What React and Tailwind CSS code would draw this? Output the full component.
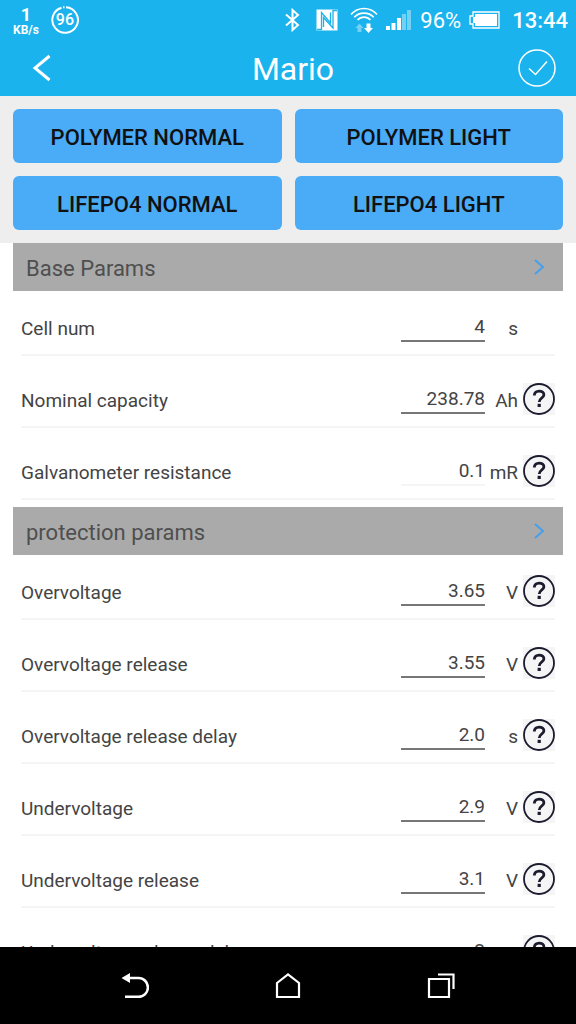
import { useState } from 'react'

const PRESETS = ['POLYMER NORMAL', 'POLYMER LIGHT', 'LIFEPO4 NORMAL', 'LIFEPO4 LIGHT']

const SECTIONS = [
  {
    title: 'Base Params',
    rows: [
      { id: 'cells', label: 'Cell num', value: '4', unit: 's', noHelp: true },
      { id: 'capacity', label: 'Nominal capacity', value: '238.78', unit: 'Ah' },
      { id: 'galvano', label: 'Galvanometer resistance', value: '0.1', unit: 'mR', readOnly: true },
    ],
  },
  {
    title: 'protection params',
    rows: [
      { id: 'ov', label: 'Overvoltage', value: '3.65', unit: 'V' },
      { id: 'ovr', label: 'Overvoltage release', value: '3.55', unit: 'V' },
      { id: 'ovrd', label: 'Overvoltage release delay', value: '2.0', unit: 's' },
      { id: 'uv', label: 'Undervoltage', value: '2.9', unit: 'V' },
      { id: 'uvr', label: 'Undervoltage release', value: '3.1', unit: 'V' },
      { id: 'uvrd', label: 'Undervoltage release delay', value: '2', unit: 's' },
    ],
  },
]

function StatusBar() {
  return (
    <div className="flex h-10 items-center justify-between pr-2 pl-[13px]">
      <div className="flex items-center gap-3">
        <div className="flex flex-col items-center pt-0.5 font-bold">
          <span className="text-lg leading-[18px]">1</span>
          <span className="text-xs leading-3">KB/s</span>
        </div>
        <div className="relative flex size-7 items-center justify-center">
          <svg viewBox="0 0 28 28" className="absolute inset-0" fill="none" stroke="currentColor" strokeWidth="2">
            <path d="M15 1.200A12.800 12.800 0 1 1 10.500 1.700M12 1.300l1.500-.1" />
          </svg>
          <span className="text-base leading-4 font-medium">96</span>
        </div>
      </div>

      <div className="flex items-center">
        <svg width="16" height="26" viewBox="0 0 16 26" fill="none" stroke="currentColor" strokeWidth="2">
          <path d="M2 7.500l12 10.500-5.500 5V3L14 8 2 18.500" />
        </svg>
        <svg width="22" height="22" viewBox="0 0 22 22" className="ml-4">
          <path fill="currentColor" d="M0.500 0.500h21v21H0.500z" />
          <path fill="none" stroke="#1ab3ed" strokeWidth="1.300" d="M1 20.500h4.500V3.500L14.500 14V3.500M7.500 18V8.500L17 19V1.500h4" />
        </svg>
        <svg width="28" height="26" viewBox="0 0 28 26" className="ml-3" fill="none" stroke="currentColor" strokeWidth="1.600">
          <path d="M1 7.500C8-.5 20-.5 27 7.500M4.300 10.200c5-5.500 14.400-5.500 19.400 0M7.500 13c3.500-3.800 9.500-3.800 13 0" />
          <path fill="currentColor" stroke="none" opacity=".4" d="M9.500 16.500l4 4.500H11.500V25H7.500V21H5.500z" />
          <path fill="currentColor" stroke="none" d="M16.500 16.500h4V21h2.500L18.500 26l-4.500-5h2.500z" />
        </svg>
        <svg width="26" height="20" viewBox="0 0 26 20" className="ml-2" fill="currentColor">
          <path d="M0 16h4v4H0zM5.500 13h4v7h-4zM11 8h4v12h-4z" />
          <path opacity=".4" d="M16 4h4v16h-4zM21 0h4v20h-4z" />
        </svg>
        <span className="ml-2 pt-0.5 text-[22px] leading-7">96%</span>
        <svg width="31" height="18" viewBox="0 0 31 18" className="ml-2" fill="none" stroke="currentColor" strokeWidth="1.300">
          <path d="M4 1h26v16H4v-4H1V5h3z" />
          <path fill="currentColor" stroke="none" d="M6 3h22v12H6v-3H4V6h2z" />
        </svg>
        <span className="ml-3 pt-0.5 text-[22px] leading-7 font-medium">13:44</span>
      </div>
    </div>
  )
}

function TitleBar() {
  return (
    <div className="flex h-14 items-center justify-between pr-5 pl-8">
      <button aria-label="Back" className="flex w-9 justify-start">
        <svg width="20" height="28" viewBox="0 0 20 28" fill="none" stroke="currentColor" strokeWidth="3">
          <path d="M17.500 2L3 14l14.500 12" />
        </svg>
      </button>
      <h1 className="pt-0.5 text-[32px] leading-10">Mario</h1>
      <button aria-label="Save">
        <svg width="38" height="38" viewBox="0 0 38 38" fill="none" stroke="currentColor" strokeWidth="1.500">
          <circle cx="19" cy="19" r="18" />
          <path d="M11 19.500l6.500 6L29 12.500" />
        </svg>
      </button>
    </div>
  )
}

function HelpButton({ label }) {
  return (
    <button aria-label={`Help: ${label}`} className="bg-[#f5f5f5] text-[#1c1b2e]">
      <svg width="32" height="32" viewBox="0 0 32 32" fill="none" stroke="currentColor">
        <circle cx="16" cy="16" r="15" strokeWidth="1.800" />
        <path strokeWidth="2.800" d="M11.300 12.500c0-6 9.600-5.600 9.600-.8 0 3.300-4.700 3.400-4.700 7.300" />
        <path strokeWidth="3.200" d="M16.200 20.800v3.200" />
      </svg>
    </button>
  )
}

function ParamRow({ row }) {
  const [value, setValue] = useState(row.value)

  return (
    <div className="mx-2 mb-[7px] flex h-[65px] items-center border-b-2 border-[#f5f5f5] pt-[9px] text-[19px] leading-7 text-[#444]">
      <label htmlFor={row.id} className="flex-1 pt-1">{row.label}</label>
      <input
        id={row.id}
        value={value}
        readOnly={row.readOnly}
        onChange={e => setValue(e.target.value)}
        className={`h-[30px] w-[84px] border-b-2 text-right outline-none ${
          row.readOnly ? 'border-[#f5f5f5]' : 'border-[#777]'
        }`}
      />
      <span className="w-[33px] pt-1 text-right">{row.unit}</span>
      <div className="ml-[5px] flex w-8">
        {!row.noHelp && <HelpButton label={row.label} />}
      </div>
    </div>
  )
}

function Section({ section }) {
  return (
    <section className="px-[13px]">
      <button className="flex h-12 w-full items-center justify-between bg-[#aaa] pr-4 pl-[13px] text-[#4f4f4f]">
        <h2 className="pt-1 text-[22px] leading-7">{section.title}</h2>
        <svg width="14" height="18" viewBox="0 0 14 18" fill="none" stroke="#3f9ff0" strokeWidth="1.800">
          <path d="M2 2l8 7-8 7" />
        </svg>
      </button>
      {section.rows.map(row => <ParamRow key={row.id} row={row} />)}
    </section>
  )
}

function NavBar() {
  return (
    <nav className="grid h-[77px] shrink-0 grid-cols-3 items-center bg-black px-[58px] text-white">
      <button aria-label="Back" className="justify-self-center">
        <svg width="28" height="28" viewBox="0 0 28 28" fill="none" stroke="currentColor" strokeWidth="2.500">
          <path d="M7 6h10.500a9.400 9.400 0 0 1 0 18.800H4" />
          <path fill="currentColor" stroke="none" d="M0.500 6L9 1v10z" />
        </svg>
      </button>
      <button aria-label="Home" className="justify-self-center">
        <svg width="28" height="28" viewBox="0 0 28 28" fill="none" stroke="currentColor" strokeWidth="2.200">
          <path d="M3 11L14 2.500 25 11v14H3z" />
        </svg>
      </button>
      <button aria-label="Recent apps" className="justify-self-center">
        <svg width="28" height="28" viewBox="0 0 28 28" fill="none" stroke="currentColor" strokeWidth="2.200">
          <path d="M2 7h20v18H2zM11 2.500h15.500V17" />
        </svg>
      </button>
    </nav>
  )
}

export default function App() {
  return (
    <div className="flex h-screen flex-col overflow-hidden bg-white font-['Roboto',sans-serif]">
      <header className="shrink-0 bg-[#1ab3ed] text-white">
        <StatusBar />
        <TitleBar />
      </header>

      <div className="grid shrink-0 grid-cols-2 gap-[13px] bg-[#eee] p-[13px]">
        {PRESETS.map(name => (
          <button key={name} className="h-[54px] rounded-md bg-[#4aabf7] pt-0.5 text-[22px] font-medium text-[#111]">
            {name}
          </button>
        ))}
      </div>

      <main className="min-h-0 flex-1 overflow-hidden">
        {SECTIONS.map(s => <Section key={s.title} section={s} />)}
      </main>

      <NavBar />
    </div>
  )
}
